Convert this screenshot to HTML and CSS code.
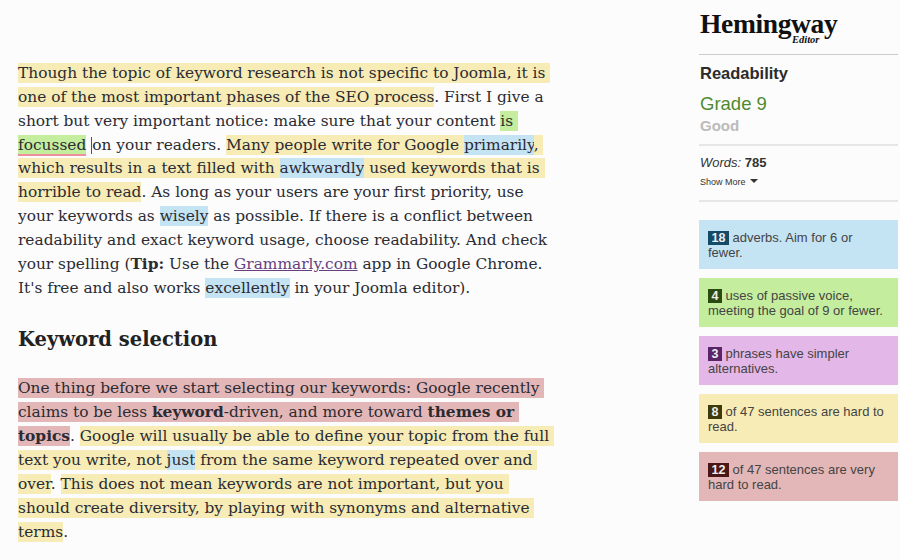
FILE: index.html
```html
<!DOCTYPE html>
<html lang="en">
<head>
<meta charset="utf-8">
<title>Hemingway Editor</title>
<link rel="stylesheet" href="styles.css">
</head>
<body>
<div class="page">
<main class="editor">
<p class="para"><span class="hard">Though the topic of keyword research is not specific to Joomla, it is&nbsp;</span><br>
<span class="hard">one of the most important phases of the SEO process</span>. First I give a<br>
short but very important notice: make sure that your content <span class="passive">is&nbsp;</span><br>
<span class="passive spell">focussed</span> <span class="caret"></span>on your readers. <span class="hard">Many people write for Google </span><span class="adverb">primarily</span><span class="hard">,&nbsp;</span><br>
<span class="hard">which results in a text filled with </span><span class="adverb">awkwardly</span><span class="hard"> used keywords that is&nbsp;</span><br>
<span class="hard">horrible to read</span>. As long as your users are your first priority, use<br>
your keywords as <span class="adverb">wisely</span> as possible. If there is a conflict between<br>
readability and exact keyword usage, choose readability. And check<br>
your spelling (<b>Tip:</b> Use the <a class="link" href="#">Grammarly.com</a> app in Google Chrome.<br>
It's free and also works <span class="adverb">excellently</span> in your Joomla editor).</p>
<h2 class="heading">Keyword selection</h2>
<p class="para"><span class="vhard">One thing before we start selecting our keywords: Google recently&nbsp;</span><br>
<span class="vhard">claims to be less <b>keyword</b>-driven, and more toward <b>themes or&nbsp;</b></span><br>
<span class="vhard"><b>topics</b></span>. <span class="hard">Google will usually be able to define your topic from the full&nbsp;</span><br>
<span class="hard">text you write, not </span><span class="adverb">just</span><span class="hard"> from the same keyword repeated over and&nbsp;</span><br>
<span class="hard">over</span>. <span class="hard">This does not mean keywords are not important, but you&nbsp;</span><br>
<span class="hard">should create diversity, by playing with synonyms and alternative&nbsp;</span><br>
<span class="hard">terms</span>.</p>
</main>
<aside class="side">
<header class="logo"><span class="logo-name">Hemingway</span><span class="logo-sub">Editor</span></header>
<section class="block read">
<h3 class="read-title">Readability</h3>
<div class="grade">Grade 9</div>
<div class="good">Good</div>
</section>
<section class="block counts">
<div class="words"><i>Words:</i> <b>785</b></div>
<div class="more">Show More <span class="tri"></span></div>
</section>
<div class="cards">
<div class="card c-blue"><div><span class="num n-blue">18</span> adverbs. Aim for 6 or</div><div>fewer.</div></div>
<div class="card c-green"><div><span class="num n-green">4</span> uses of passive voice,</div><div>meeting the goal of 9 or fewer.</div></div>
<div class="card c-purple"><div><span class="num n-purple">3</span> phrases have simpler</div><div>alternatives.</div></div>
<div class="card c-yellow"><div><span class="num n-yellow">8</span> of 47 sentences are hard to</div><div>read.</div></div>
<div class="card c-red"><div><span class="num n-red">12</span> of 47 sentences are very</div><div>hard to read.</div></div>
</div>
</aside>
</div>
</body>
</html>
```
FILE: styles.css
```css
* { box-sizing: border-box; }
html, body { margin: 0; padding: 0; }
body { background: #fcfcfc; width: 900px; height: 560px; overflow: hidden; color: #2b2b33; }
.page { display: flex; align-items: flex-start; }
.editor { width: 699px; padding: 62px 0 0 18px; font-family: "DejaVu Serif", serif; font-size: 15.4px; white-space: nowrap; }
.para { margin: 0; line-height: 23.85px; }
.hard, .vhard, .adverb, .passive { padding: 1px 0; }
.heading { margin: 26px 0 23px; font-size: 19.5px; line-height: 28px; font-weight: 700; color: #222; }
.hard { background: #f7ecb5; }
.vhard { background: #e3b7b7; }
.adverb { background: #c4e3f3; }
.passive { background: #c4ed9d; }
.passive.spell { padding-bottom: 0; border-bottom: 2px solid #ee8f9c; }
.caret { display: inline-block; width: 1px; height: 17px; background: #555; vertical-align: -4px; }
.link { color: #663f7e; }
.side { width: 199px; font-family: "Liberation Sans", sans-serif; }
.logo { position: relative; height: 55px; padding: 9px 0 0 1px; border-bottom: 1px solid #ccc; font-family: "Liberation Serif", serif; font-weight: 700; color: #111; }
.logo-name { display: block; font-size: 27.5px; line-height: 30px; letter-spacing: -0.35px; }
.logo-sub { position: absolute; left: 93px; top: 35px; font-size: 10.5px; line-height: 10px; font-style: italic; }
.block { border-bottom: 2px solid #e6e6e6; padding-left: 1px; }
.read { height: 91px; padding-top: 8px; }
.read-title { margin: 0; font-size: 16.5px; line-height: 20px; font-weight: 700; color: #2b2b2b; }
.grade { margin-top: 10px; font-size: 18.5px; line-height: 22px; color: #4f8a2f; }
.good { margin-top: 2px; font-size: 15px; line-height: 18px; font-weight: 700; color: #bbb; }
.counts { height: 56px; padding-top: 9px; }
.words { font-size: 13px; line-height: 15px; color: #333; }
.more { margin-top: 7px; font-size: 9px; line-height: 11px; color: #333; }
.tri { display: inline-block; width: 0; height: 0; margin-left: 2px; vertical-align: 2px; border: 4px solid transparent; border-top-color: #333; border-bottom-width: 0; }
.cards { display: flex; flex-direction: column; gap: 9.25px; margin-top: 18px; }
.card { height: 48.75px; padding: 9.5px 9px; font-size: 13px; line-height: 15px; color: #444; white-space: nowrap; }
.num { display: inline-block; padding: 0 3.5px; font-size: 12.5px; line-height: 14px; font-weight: 700; color: #eee; }
.c-blue { background: #c4e3f3; }
.c-green { background: #c4ed9d; }
.c-purple { background: #e3b7e8; }
.c-yellow { background: #f7ecb5; }
.c-red { background: #e3b7b7; }
.n-blue { background: #154a69; }
.n-green { background: #2b4a12; }
.n-purple { background: #5c2468; }
.n-yellow { background: #3f3a0c; }
.n-red { background: #4a1616; }
```
